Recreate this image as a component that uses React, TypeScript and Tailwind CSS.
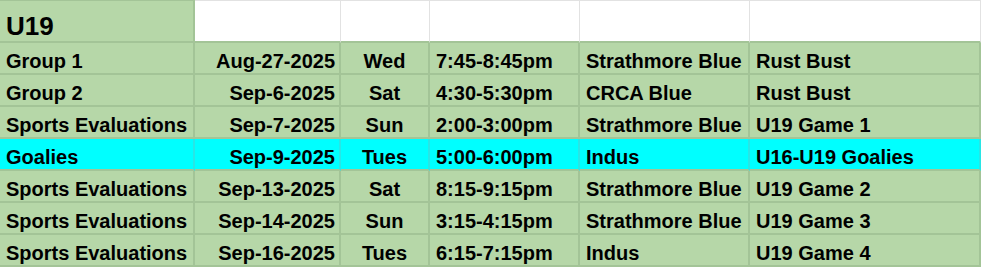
import React from 'react';

type Row = {
  name: string;
  date: string;
  day: string;
  time: string;
  field: string;
  event: string;
  highlight?: boolean;
};

const rows: Row[] = [
  { name: 'Group 1', date: 'Aug-27-2025', day: 'Wed', time: '7:45-8:45pm', field: 'Strathmore Blue', event: 'Rust Bust' },
  { name: 'Group 2', date: 'Sep-6-2025', day: 'Sat', time: '4:30-5:30pm', field: 'CRCA Blue', event: 'Rust Bust' },
  { name: 'Sports Evaluations', date: 'Sep-7-2025', day: 'Sun', time: '2:00-3:00pm', field: 'Strathmore Blue', event: 'U19 Game 1' },
  { name: 'Goalies', date: 'Sep-9-2025', day: 'Tues', time: '5:00-6:00pm', field: 'Indus', event: 'U16-U19 Goalies', highlight: true },
  { name: 'Sports Evaluations', date: 'Sep-13-2025', day: 'Sat', time: '8:15-9:15pm', field: 'Strathmore Blue', event: 'U19 Game 2' },
  { name: 'Sports Evaluations', date: 'Sep-14-2025', day: 'Sun', time: '3:15-4:15pm', field: 'Strathmore Blue', event: 'U19 Game 3' },
  { name: 'Sports Evaluations', date: 'Sep-16-2025', day: 'Tues', time: '6:15-7:15pm', field: 'Indus', event: 'U19 Game 4' },
];

const cols = 'grid grid-cols-[195px_146px_89px_150px_170px_231px]';

const App: React.FC = () => {
  return (
    <div className="w-[981px] h-[267px] overflow-hidden bg-white font-['Liberation_Sans',Arial,sans-serif] font-bold text-black">
      {/* title row */}
      <div className={`${cols} h-[43px]`}>
        <div className="bg-[#b6d7a8] border-t border-t-[#a3c497] border-r-2 border-b-2 border-[#a3c497] flex items-end pl-[6px] pb-0 text-[26px] leading-[30px]">
          U19
        </div>
        {[0, 1, 2, 3, 4].map((i) => (
          <div key={i} className="border-t border-r border-[#e2e2e2] border-b-2 border-b-[#a3c497]" />
        ))}
      </div>

      {rows.map((r, i) => {
        const bg = r.highlight ? 'bg-[#00ffff]' : 'bg-[#b6d7a8]';
        const br = r.highlight ? 'border-r-[#28e6e6]' : 'border-r-[#a3c497]';
        const cell = `${bg} border-r-2 ${br} border-b-2 border-b-[#a3c497] h-[32px] flex items-end pb-0 text-[20px] leading-[23px] whitespace-nowrap overflow-hidden`;
        return (
          <div key={i} className={cols}>
            <div className={`${cell} pl-[6px]`}>{r.name}</div>
            <div className={`${cell} justify-end pr-[4px]`}>{r.date}</div>
            <div className={`${cell} justify-center`}>{r.day}</div>
            <div className={`${cell} pl-[6px]`}>{r.time}</div>
            <div className={`${cell} pl-[6px]`}>{r.field}</div>
            <div className={`${cell} pl-[6px]`}>{r.event}</div>
          </div>
        );
      })}
    </div>
  );
};

export default App;
